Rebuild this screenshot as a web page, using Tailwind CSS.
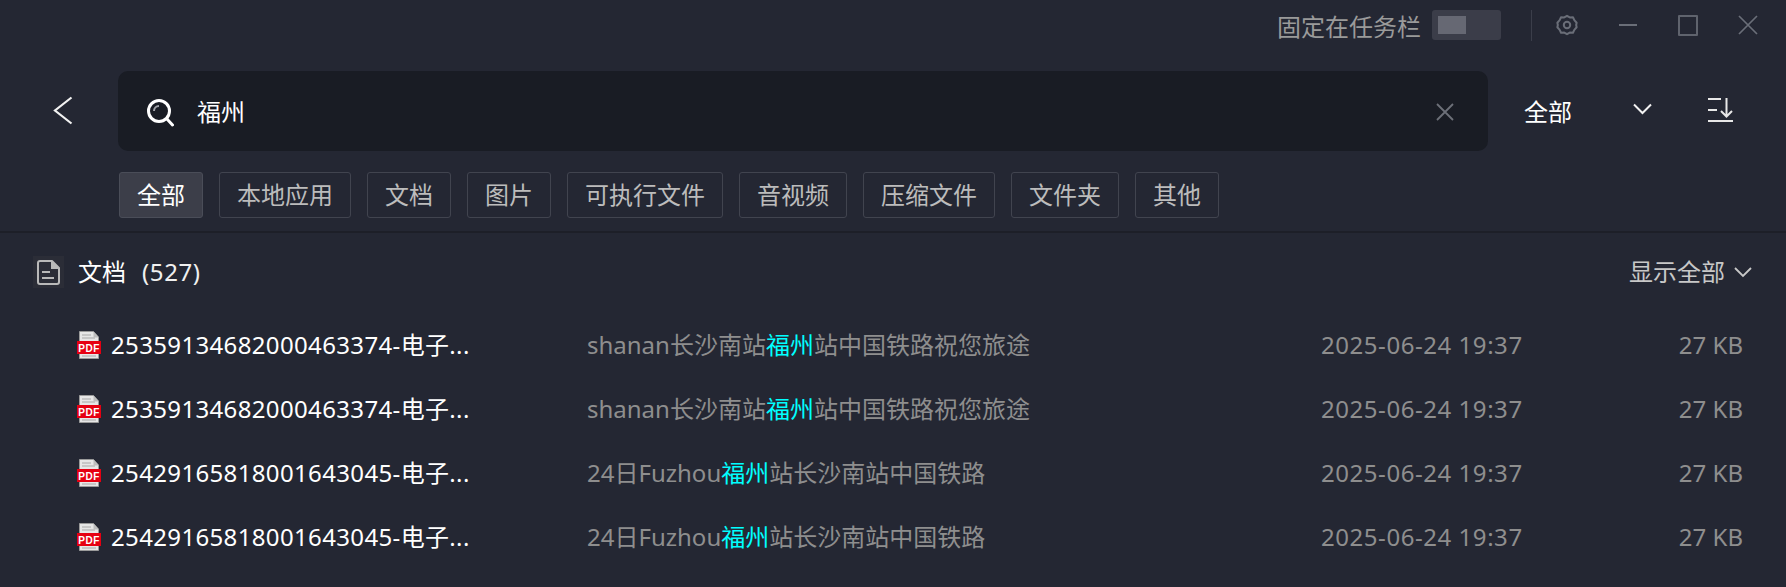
<!DOCTYPE html>
<html>
<head>
<meta charset="utf-8">
<script src="https://cdn.jsdelivr.net/npm/@tailwindcss/browser@4"></script>
</head>
<body class="m-0 bg-[#242733]">
<div class="w-[1786px] h-[587px] overflow-hidden flex flex-col bg-[#242733] font-['Noto_Sans','Noto_Sans_CJK_SC',sans-serif] text-[24px] leading-[32px]">
  <!-- title bar -->
  <div class="h-[50px] flex items-center shrink-0">
    <div class="ml-[1277px] w-[144px] text-[#9a9a9a] mt-[4px]">固定在任务栏</div>
    <div class="ml-[11px] w-[69px] h-[30px] rounded-[3px] bg-[#3b3d49] flex items-center pl-[6px]"><div class="w-[28px] h-[18px] bg-[#666873]"></div></div>
    <div class="ml-[30px] w-[1px] h-[31px] bg-[#3b3e4a]"></div>
    <svg class="ml-[24px] w-[22px] h-[22px]" viewBox="0 0 24 24" fill="none" stroke="#6a6e78" stroke-width="2.2"><path d="M12 2l3 1.800 3.500-.3 1.500 3.200L22.500 9.500 22 12l.5 2.500-2.500 2.800-1.500 3.200-3.500-.3L12 22l-3-1.800-3.500.3L4 17.300 1.500 14.500 2 12l-.5-2.500L4 6.700 5.500 3.500 9 3.800z" stroke-linejoin="round"/><circle cx="12" cy="12" r="3.500"/></svg>
    <div class="ml-[41px] w-[18px] h-[2px] bg-[#6a6e78]"></div>
    <div class="ml-[41px] w-[20px] h-[21px] border-2 border-[#5f636d] rounded-[1px]"></div>
    <svg class="ml-[40px] w-[20px] h-[20px]" viewBox="0 0 20 20" fill="none" stroke="#6a6e78" stroke-width="1.700"><path d="M1 1l18 18M19 1L1 19"/></svg>
  </div>
  <!-- search row -->
  <div class="mt-[21px] h-[80px] flex items-center shrink-0">
    <svg class="ml-[53px] w-[20px] h-[29px] -mt-[2px]" viewBox="0 0 20 29" fill="none" stroke="#f2f2f2" stroke-width="2.200"><path d="M18.500 1.500L2 14.500l16.500 13"/></svg>
    <div class="ml-[45px] w-[1370px] h-[80px] rounded-[10px] bg-[#191c24] flex items-center">
      <svg class="ml-[28px] w-[28px] h-[29px] mt-[2px]" viewBox="0 0 28 29" fill="none" stroke="#ffffff" stroke-width="3"><circle cx="13" cy="13" r="10.500"/><path d="M21 21l5.500 6" stroke-linecap="round"/><path d="M8 13a5 5 0 0 1 5-5" stroke="#a0a2a8" stroke-width="2"/></svg>
      <div class="ml-[23px] text-white mt-[2px]">福州</div>
      <svg class="ml-auto mr-[34px] w-[18px] h-[18px] mt-[2px]" viewBox="0 0 18 18" fill="none" stroke="#6d7079" stroke-width="1.800"><path d="M1 1l16 16M17 1L1 17"/></svg>
    </div>
    <div class="ml-[36px] w-[48px] text-white mt-[1px]">全部</div>
    <svg class="ml-[61px] w-[19px] h-[12px] -mt-[4px]" viewBox="0 0 19 12" fill="none" stroke="#f2f2f2" stroke-width="2"><path d="M1 1.500l8.500 8.500L18 1.500"/></svg>
    <svg class="ml-[55px] w-[26px] h-[26px] -mt-[3px]" viewBox="0 0 26 26" fill="none" stroke="#e8e8e8" stroke-width="2"><path d="M1 2h13M1 13h9M1 24h25M19.500 1v18M14 14l5.500 5.500L25 14"/></svg>
  </div>
  <!-- chips -->
  <div class="mt-[21px] ml-[119px] flex gap-[16px] text-[#bcbcbc] shrink-0">
    <div class="h-[46px] px-[17px] flex items-center rounded-[3px] border border-[#4a4d58] bg-[#3c3e49] text-white">全部</div>
    <div class="h-[46px] px-[17px] flex items-center rounded-[3px] border border-[#41444f]">本地应用</div>
    <div class="h-[46px] px-[17px] flex items-center rounded-[3px] border border-[#41444f]">文档</div>
    <div class="h-[46px] px-[17px] flex items-center rounded-[3px] border border-[#41444f]">图片</div>
    <div class="h-[46px] px-[17px] flex items-center rounded-[3px] border border-[#41444f]">可执行文件</div>
    <div class="h-[46px] px-[17px] flex items-center rounded-[3px] border border-[#41444f]">音视频</div>
    <div class="h-[46px] px-[17px] flex items-center rounded-[3px] border border-[#41444f]">压缩文件</div>
    <div class="h-[46px] px-[17px] flex items-center rounded-[3px] border border-[#41444f]">文件夹</div>
    <div class="h-[46px] px-[17px] flex items-center rounded-[3px] border border-[#41444f]">其他</div>
  </div>
  <div class="mt-[13px] h-[2px] bg-[#1d1f28] shrink-0"></div>
  <!-- section header -->
  <div class="mt-[23px] h-[32px] flex items-center shrink-0">
    <div class="ml-[33px] w-[31px] h-[32px] bg-[#2b2d37] flex items-center justify-center">
      <svg class="w-[23px] h-[25px]" viewBox="0 0 23 25" fill="none" stroke="#b9b9b9" stroke-width="2"><path d="M3 1h12l7 7v14a2 2 0 0 1-2 2H3a2 2 0 0 1-2-2V3a2 2 0 0 1 2-2z" stroke-linejoin="round"/><path d="M15 1v7h7" fill="#b9b9b9"/><path d="M5 12h8M5 18h12"/></svg>
    </div>
    <div class="ml-[14px] text-white">文档</div>
    <div class="ml-[16px] text-[#f0f0f0] tracking-[0.6px]">(527)</div>
    <div class="ml-auto text-[#c8c8c8]">显示全部</div>
    <svg class="ml-[9px] mr-[34px] w-[18px] h-[11px]" viewBox="0 0 18 11" fill="none" stroke="#c8c8c8" stroke-width="1.800"><path d="M1 1l8 8 8-8"/></svg>
  </div>
  <!-- rows -->
  <div class="mt-[25px] flex flex-col">
    <div class="h-[64px] pl-[77px] pr-[43px] grid grid-cols-[34px_476px_734px_1fr] items-center">
      <svg class="w-[24px] h-[28px] -mt-[1px]" viewBox="0 0 24 28"><path d="M2.500.5h14l5 5.500v21.500h-19z" fill="#e6e6e6" stroke="#9a9a9a"/><path d="M5 4h9M5 7h13M5 25h14" stroke="#a8a8a8"/><path d="M16.500.5v6h5" fill="#bdbdbd"/><rect x="0" y="10" width="24" height="13" fill="#e60012"/><text x="12" y="20.500" text-anchor="middle" fill="#fff" font-size="10" font-weight="700" letter-spacing="0.500" font-family="Liberation Sans">PDF</text></svg>
      <div class="text-white whitespace-nowrap tracking-[0.35px]">25359134682000463374-电子...</div>
      <div class="text-[#8e8e8e] whitespace-nowrap">shanan长沙南站<span class="text-[#00ffff]">福州</span>站中国铁路祝您旅途</div>
      <div class="flex justify-between text-[#8e8e8e]"><span class="tracking-[0.55px]">2025-06-24 19:37</span><span>27 KB</span></div>
    </div>
    <div class="h-[64px] pl-[77px] pr-[43px] grid grid-cols-[34px_476px_734px_1fr] items-center">
      <svg class="w-[24px] h-[28px] -mt-[1px]" viewBox="0 0 24 28"><path d="M2.500.5h14l5 5.500v21.500h-19z" fill="#e6e6e6" stroke="#9a9a9a"/><path d="M5 4h9M5 7h13M5 25h14" stroke="#a8a8a8"/><path d="M16.500.5v6h5" fill="#bdbdbd"/><rect x="0" y="10" width="24" height="13" fill="#e60012"/><text x="12" y="20.500" text-anchor="middle" fill="#fff" font-size="10" font-weight="700" letter-spacing="0.500" font-family="Liberation Sans">PDF</text></svg>
      <div class="text-white whitespace-nowrap tracking-[0.35px]">25359134682000463374-电子...</div>
      <div class="text-[#8e8e8e] whitespace-nowrap">shanan长沙南站<span class="text-[#00ffff]">福州</span>站中国铁路祝您旅途</div>
      <div class="flex justify-between text-[#8e8e8e]"><span class="tracking-[0.55px]">2025-06-24 19:37</span><span>27 KB</span></div>
    </div>
    <div class="h-[64px] pl-[77px] pr-[43px] grid grid-cols-[34px_476px_734px_1fr] items-center">
      <svg class="w-[24px] h-[28px] -mt-[1px]" viewBox="0 0 24 28"><path d="M2.500.5h14l5 5.500v21.500h-19z" fill="#e6e6e6" stroke="#9a9a9a"/><path d="M5 4h9M5 7h13M5 25h14" stroke="#a8a8a8"/><path d="M16.500.5v6h5" fill="#bdbdbd"/><rect x="0" y="10" width="24" height="13" fill="#e60012"/><text x="12" y="20.500" text-anchor="middle" fill="#fff" font-size="10" font-weight="700" letter-spacing="0.500" font-family="Liberation Sans">PDF</text></svg>
      <div class="text-white whitespace-nowrap tracking-[0.35px]">25429165818001643045-电子...</div>
      <div class="text-[#8e8e8e] whitespace-nowrap">24日Fuzhou<span class="text-[#00ffff]">福州</span>站长沙南站中国铁路</div>
      <div class="flex justify-between text-[#8e8e8e]"><span class="tracking-[0.55px]">2025-06-24 19:37</span><span>27 KB</span></div>
    </div>
    <div class="h-[64px] pl-[77px] pr-[43px] grid grid-cols-[34px_476px_734px_1fr] items-center">
      <svg class="w-[24px] h-[28px] -mt-[1px]" viewBox="0 0 24 28"><path d="M2.500.5h14l5 5.500v21.500h-19z" fill="#e6e6e6" stroke="#9a9a9a"/><path d="M5 4h9M5 7h13M5 25h14" stroke="#a8a8a8"/><path d="M16.500.5v6h5" fill="#bdbdbd"/><rect x="0" y="10" width="24" height="13" fill="#e60012"/><text x="12" y="20.500" text-anchor="middle" fill="#fff" font-size="10" font-weight="700" letter-spacing="0.500" font-family="Liberation Sans">PDF</text></svg>
      <div class="text-white whitespace-nowrap tracking-[0.35px]">25429165818001643045-电子...</div>
      <div class="text-[#8e8e8e] whitespace-nowrap">24日Fuzhou<span class="text-[#00ffff]">福州</span>站长沙南站中国铁路</div>
      <div class="flex justify-between text-[#8e8e8e]"><span class="tracking-[0.55px]">2025-06-24 19:37</span><span>27 KB</span></div>
    </div>
  </div>
</div>
</body>
</html>
